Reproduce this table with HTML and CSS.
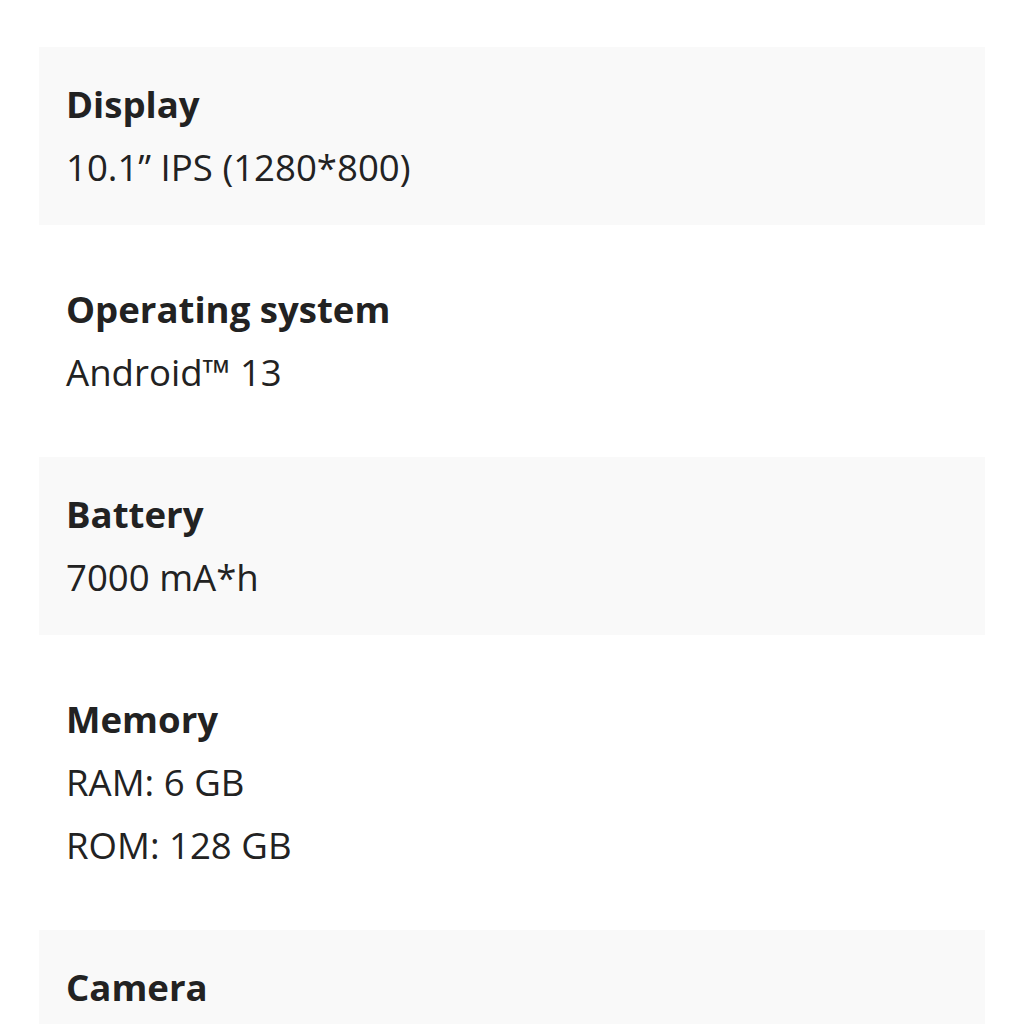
FILE: index.html
```html
<!DOCTYPE html>
<html>
<head>
<meta charset="utf-8">
<link rel="stylesheet" href="styles.css">
</head>
<body>
<div class="specs">
  <div class="item shaded">
    <div class="title">Display</div>
    <div class="value">10.1” IPS (1280*800)</div>
  </div>
  <div class="item">
    <div class="title">Operating system</div>
    <div class="value">Android™ 13</div>
  </div>
  <div class="item shaded">
    <div class="title">Battery</div>
    <div class="value">7000 mA*h</div>
  </div>
  <div class="item">
    <div class="title">Memory</div>
    <div class="value">RAM: 6 GB</div>
    <div class="value">ROM: 128 GB</div>
  </div>
  <div class="item shaded">
    <div class="title">Camera</div>
  </div>
</div>
</body>
</html>
```
FILE: styles.css
```css
html, body {
  margin: 0;
  padding: 0;
  background: #fff;
}
body {
  font-family: "Open Sans", "Liberation Sans", sans-serif;
  color: #222;
  overflow: hidden;
  height: 1024px;
}
.specs {
  padding: 47px 39px 0;
  display: flex;
  flex-direction: column;
  gap: 27px;
}
.item {
  padding: 26px 27px;
  font-size: 36.6px;
  line-height: 63px;
}
.shaded {
  background: #f9f9f9;
}
.title {
  font-weight: 700;
}
.value {
  font-weight: 400;
}
```
